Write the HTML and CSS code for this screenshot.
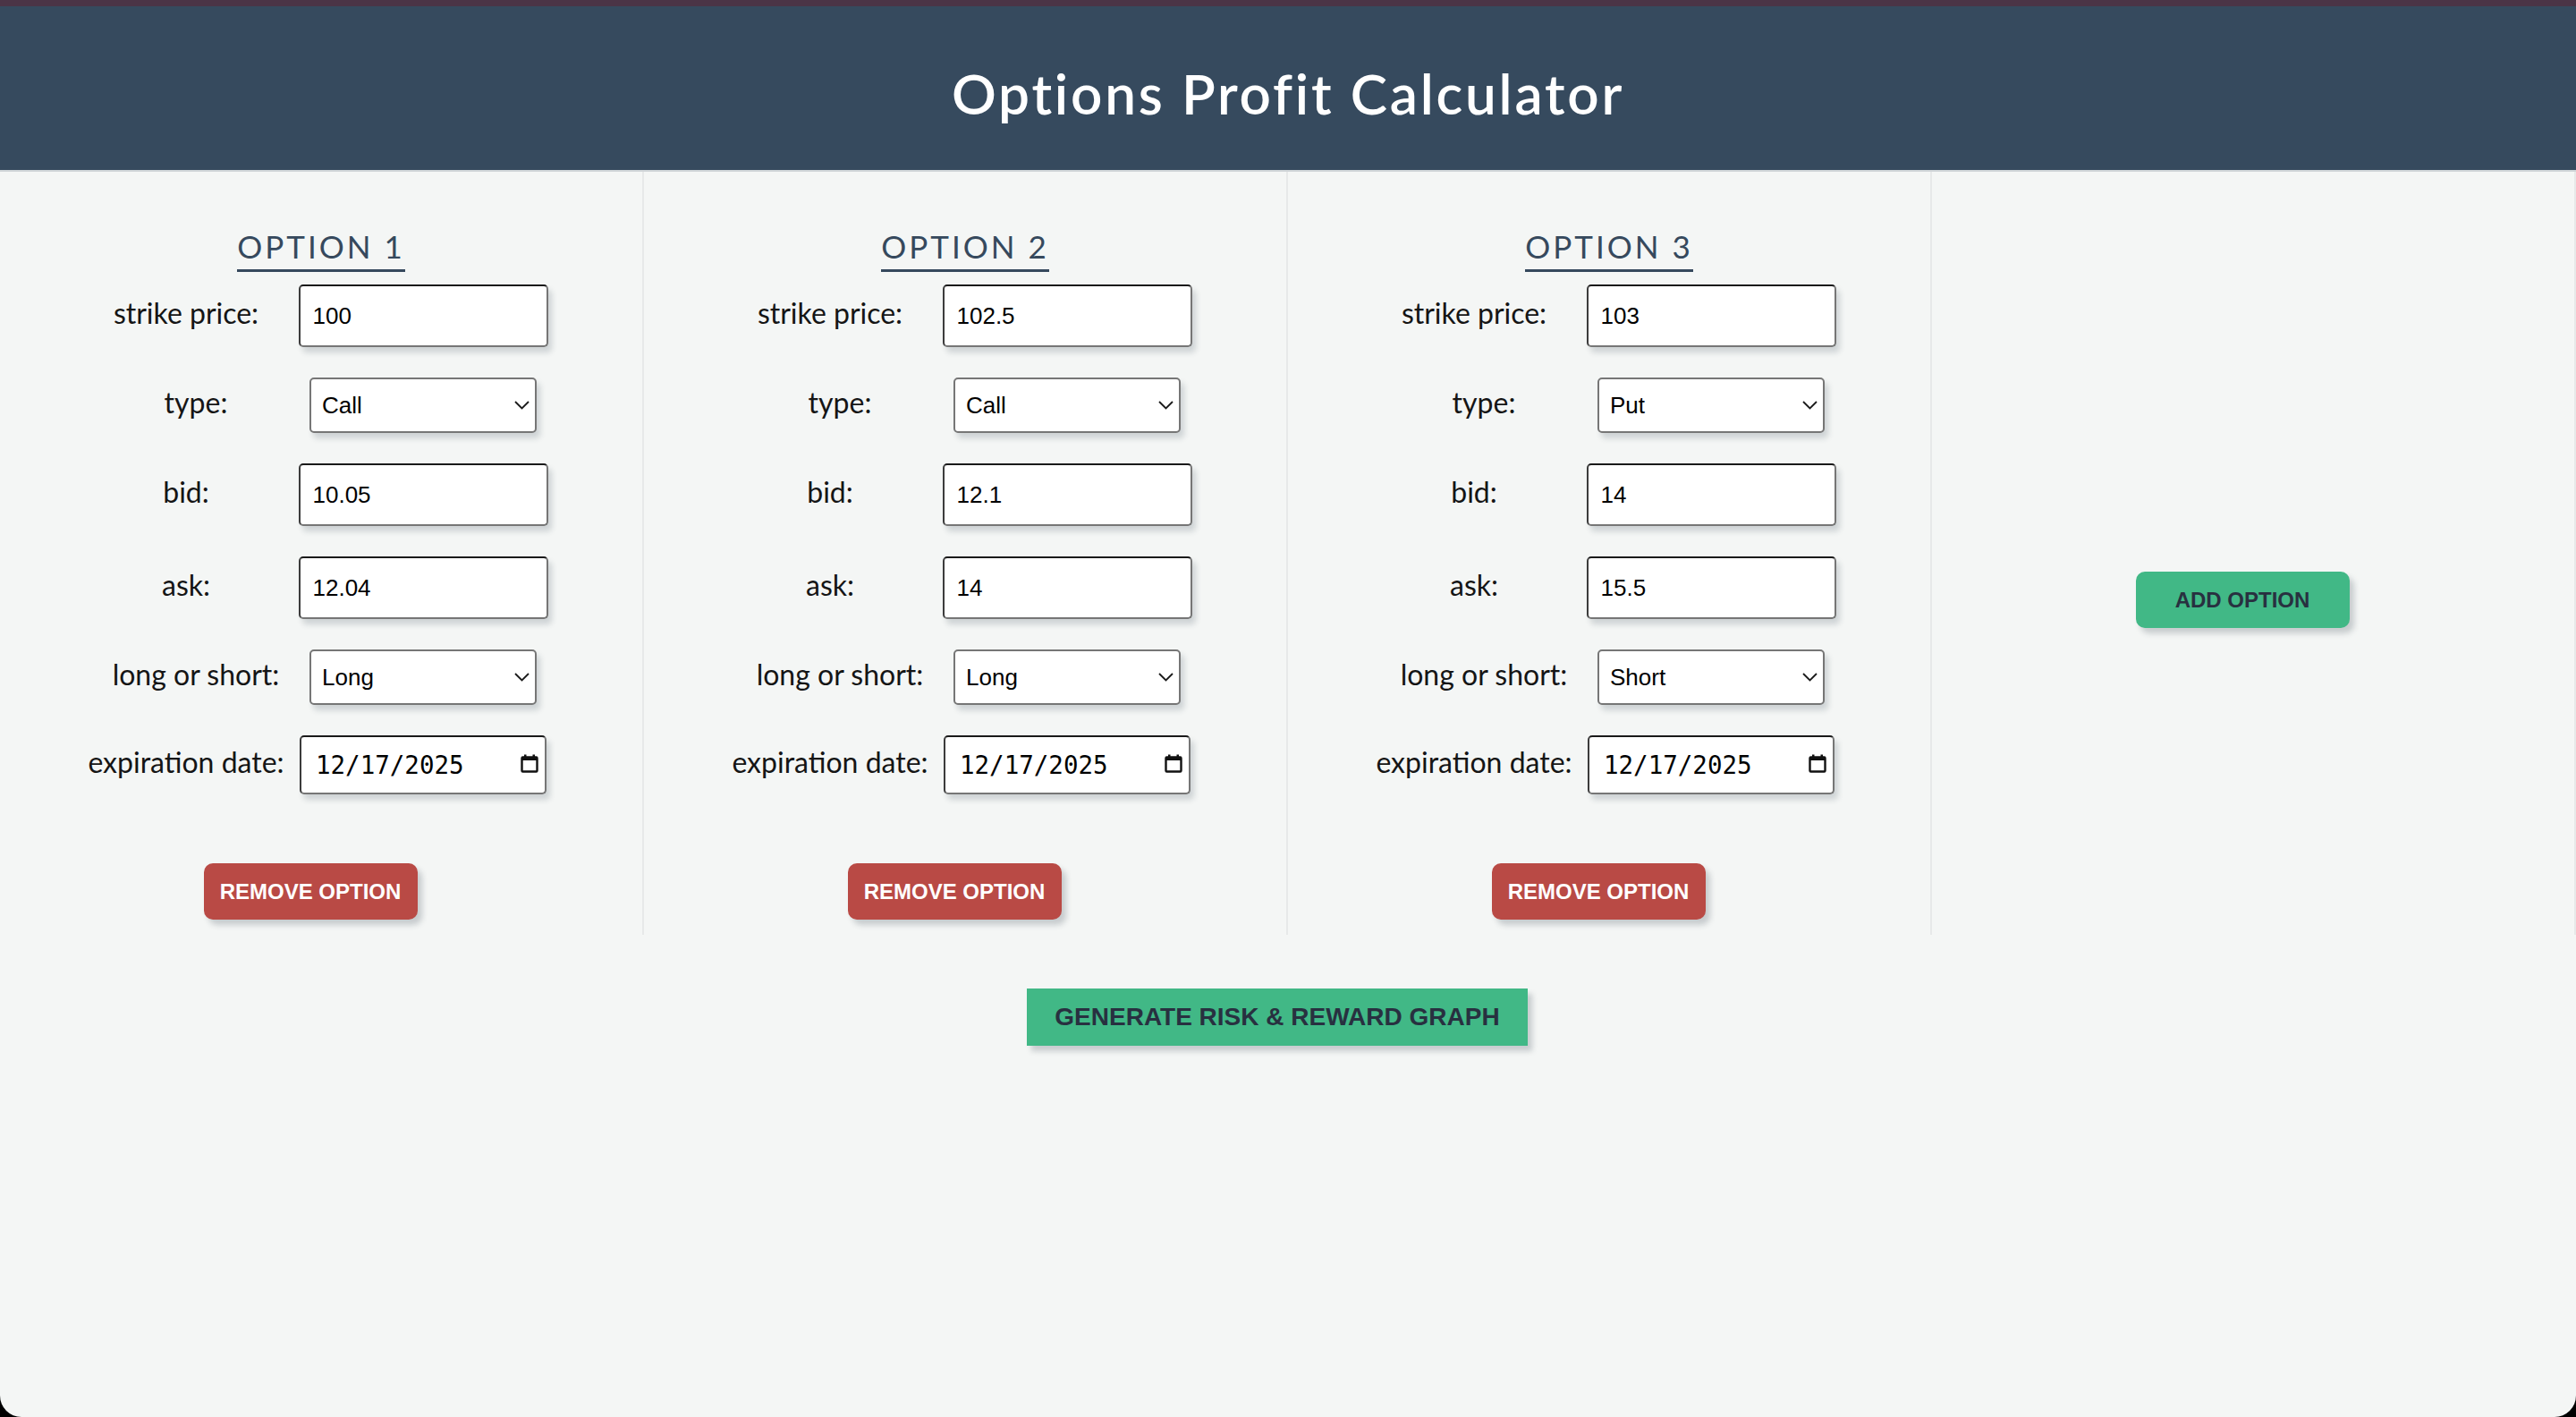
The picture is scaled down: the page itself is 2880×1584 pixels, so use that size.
FILE: index.html
```html
<!DOCTYPE html>
<html lang="en">
<head>
<meta charset="utf-8">
<title>Options Profit Calculator</title>
<link rel="stylesheet" href="styles.css">
</head>
<body>
<div class="app">
  <header class="topbar">
    <h1 class="title">Options Profit Calculator</h1>
  </header>

  <main class="options">
    <section class="option">
      <h2 class="option-heading">OPTION 1</h2>
      <div class="fields">
        <label class="field-label">strike price:</label>
        <input class="text-input" type="text" value="100">
        <label class="field-label select-label">type:</label>
        <div class="select-wrap">
          <select class="select"><option selected>Call</option><option>Put</option></select>
          <svg class="chevron" viewBox="0 0 17 10" width="17" height="10"><path d="M1 1 L8.5 8.5 L16 1" /></svg>
        </div>
        <label class="field-label">bid:</label>
        <input class="text-input" type="text" value="10.05">
        <label class="field-label">ask:</label>
        <input class="text-input" type="text" value="12.04">
        <label class="field-label select-label">long or short:</label>
        <div class="select-wrap">
          <select class="select"><option selected>Long</option><option>Short</option></select>
          <svg class="chevron" viewBox="0 0 17 10" width="17" height="10"><path d="M1 1 L8.5 8.5 L16 1" /></svg>
        </div>
        <label class="field-label">expiration date:</label>
        <div class="date-wrap">
          <input class="date-input" type="text" value="12/17/2025">
          <svg class="calendar" viewBox="0 0 20 21" width="20" height="21"><rect x="1.5" y="3.5" width="17" height="16" rx="1" /><rect class="cal-fill" x="1" y="3" width="18" height="4" /><rect class="cal-fill" x="4" y="0.5" width="2.5" height="4" /><rect class="cal-fill" x="13.5" y="0.5" width="2.5" height="4" /></svg>
        </div>
      </div>
      <button class="btn btn-remove">REMOVE OPTION</button>
    </section>

    <section class="option">
      <h2 class="option-heading">OPTION 2</h2>
      <div class="fields">
        <label class="field-label">strike price:</label>
        <input class="text-input" type="text" value="102.5">
        <label class="field-label select-label">type:</label>
        <div class="select-wrap">
          <select class="select"><option selected>Call</option><option>Put</option></select>
          <svg class="chevron" viewBox="0 0 17 10" width="17" height="10"><path d="M1 1 L8.5 8.5 L16 1" /></svg>
        </div>
        <label class="field-label">bid:</label>
        <input class="text-input" type="text" value="12.1">
        <label class="field-label">ask:</label>
        <input class="text-input" type="text" value="14">
        <label class="field-label select-label">long or short:</label>
        <div class="select-wrap">
          <select class="select"><option selected>Long</option><option>Short</option></select>
          <svg class="chevron" viewBox="0 0 17 10" width="17" height="10"><path d="M1 1 L8.5 8.5 L16 1" /></svg>
        </div>
        <label class="field-label">expiration date:</label>
        <div class="date-wrap">
          <input class="date-input" type="text" value="12/17/2025">
          <svg class="calendar" viewBox="0 0 20 21" width="20" height="21"><rect x="1.5" y="3.5" width="17" height="16" rx="1" /><rect class="cal-fill" x="1" y="3" width="18" height="4" /><rect class="cal-fill" x="4" y="0.5" width="2.5" height="4" /><rect class="cal-fill" x="13.5" y="0.5" width="2.5" height="4" /></svg>
        </div>
      </div>
      <button class="btn btn-remove">REMOVE OPTION</button>
    </section>

    <section class="option">
      <h2 class="option-heading">OPTION 3</h2>
      <div class="fields">
        <label class="field-label">strike price:</label>
        <input class="text-input" type="text" value="103">
        <label class="field-label select-label">type:</label>
        <div class="select-wrap">
          <select class="select"><option>Call</option><option selected>Put</option></select>
          <svg class="chevron" viewBox="0 0 17 10" width="17" height="10"><path d="M1 1 L8.5 8.5 L16 1" /></svg>
        </div>
        <label class="field-label">bid:</label>
        <input class="text-input" type="text" value="14">
        <label class="field-label">ask:</label>
        <input class="text-input" type="text" value="15.5">
        <label class="field-label select-label">long or short:</label>
        <div class="select-wrap">
          <select class="select"><option>Long</option><option selected>Short</option></select>
          <svg class="chevron" viewBox="0 0 17 10" width="17" height="10"><path d="M1 1 L8.5 8.5 L16 1" /></svg>
        </div>
        <label class="field-label">expiration date:</label>
        <div class="date-wrap">
          <input class="date-input" type="text" value="12/17/2025">
          <svg class="calendar" viewBox="0 0 20 21" width="20" height="21"><rect x="1.5" y="3.5" width="17" height="16" rx="1" /><rect class="cal-fill" x="1" y="3" width="18" height="4" /><rect class="cal-fill" x="4" y="0.5" width="2.5" height="4" /><rect class="cal-fill" x="13.5" y="0.5" width="2.5" height="4" /></svg>
        </div>
      </div>
      <button class="btn btn-remove">REMOVE OPTION</button>
    </section>

    <section class="option option-add">
      <button class="btn btn-add">ADD OPTION</button>
    </section>
  </main>

  <div class="actions">
    <button class="btn btn-generate">GENERATE RISK &amp; REWARD GRAPH</button>
  </div>
</div>
</body>
</html>
```

FILE: styles.css
```css
* {
  box-sizing: border-box;
}

html,
body {
  margin: 0;
  padding: 0;
  background: #000;
}

.app {
  min-height: 1584px;
  background: #f4f6f5;
  border-radius: 0 0 24px 24px;
  overflow: hidden;
  font-family: Lato, "Noto Sans", sans-serif;
}

/* header */
.topbar {
  background: #364a5e;
  border-top: 7px solid #4b3446;
  border-bottom: 2px solid #d0d5d8;
  padding: 61px 0 50px;
  text-align: center;
}

.title {
  margin: 0;
  font-size: 62px;
  line-height: 72px;
  font-weight: 600;
  color: #ffffff;
  letter-spacing: 2.8px;
}

/* option columns */
.options {
  display: grid;
  grid-template-columns: repeat(4, 1fr);
}

.option {
  border-right: 2px solid #e7e9e9;
  padding: 62px 0 17px;
  display: flex;
  flex-direction: column;
  align-items: center;
}

.option-add {
  justify-content: center;
  padding: 104px 0 0;
}

.option-heading {
  margin: 0;
  font-size: 35px;
  line-height: 42px;
  font-weight: 400;
  color: #36495d;
  letter-spacing: 3px;
  padding-bottom: 5px;
  border-bottom: 3px solid #36495d;
}

.fields {
  display: grid;
  grid-template-columns: 240px 290px;
  align-items: center;
  justify-items: center;
  margin: -3px 12px 0 0;
}

.field-label {
  font-size: 32px;
  color: #151515;
  padding-bottom: 7px;
}

.select-label {
  padding-left: 22px;
}

.text-input,
.date-input,
.select {
  font-family: "Liberation Sans", Arial, sans-serif;
  font-size: 26px;
  color: #000;
  background: #fff;
  border: 2px solid #767676;
  border-radius: 5px;
  box-shadow: 4px 6px 6px rgba(40, 55, 70, 0.18);
  outline: none;
}

.text-input,
.date-input {
  border-top-color: #1a1a1a;
  border-left-color: #3c3c3c;
}

.text-input {
  width: 279px;
  height: 70px;
  margin: 17px 0;
  padding: 0 14px;
}

.select-wrap {
  position: relative;
  width: 254px;
  height: 62px;
  margin: 17px 0;
}

.select {
  appearance: none;
  -webkit-appearance: none;
  width: 100%;
  height: 100%;
  padding: 0 12px;
}

.chevron {
  position: absolute;
  right: 8px;
  top: 26px;
  fill: none;
  stroke: #1a1a1a;
  stroke-width: 1.8;
  pointer-events: none;
}

.date-wrap {
  position: relative;
  width: 276px;
  height: 66px;
  margin: 17px 0;
}

.date-input {
  width: 100%;
  height: 100%;
  padding: 0 16px;
  font-family: "DejaVu Sans Mono", "Liberation Mono", monospace;
  font-size: 27.5px;
}

.calendar {
  position: absolute;
  right: 9px;
  top: 21px;
  fill: none;
  stroke: #111;
  stroke-width: 2.4;
  pointer-events: none;
}

.calendar .cal-fill {
  fill: #111;
  stroke: none;
}

/* buttons */
.btn {
  border: none;
  font-family: "Liberation Sans", Arial, sans-serif;
  font-weight: 700;
  cursor: pointer;
  box-shadow: 5px 6px 6px rgba(40, 55, 70, 0.22);
}

.btn-remove,
.btn-add {
  width: 239px;
  height: 63px;
  border-radius: 10px;
  font-size: 24px;
  margin-right: 24px;
}

.btn-remove {
  margin-top: 60px;
  background: #b94a45;
  color: #ffffff;
}

.btn-add {
  background: #41b886;
  color: #283040;
}

.actions {
  display: flex;
  justify-content: center;
  padding: 60px 24px 0 0;
}

.btn-generate {
  width: 560px;
  height: 64px;
  border-radius: 0;
  background: #41b886;
  color: #283040;
  font-size: 28px;
}
```
